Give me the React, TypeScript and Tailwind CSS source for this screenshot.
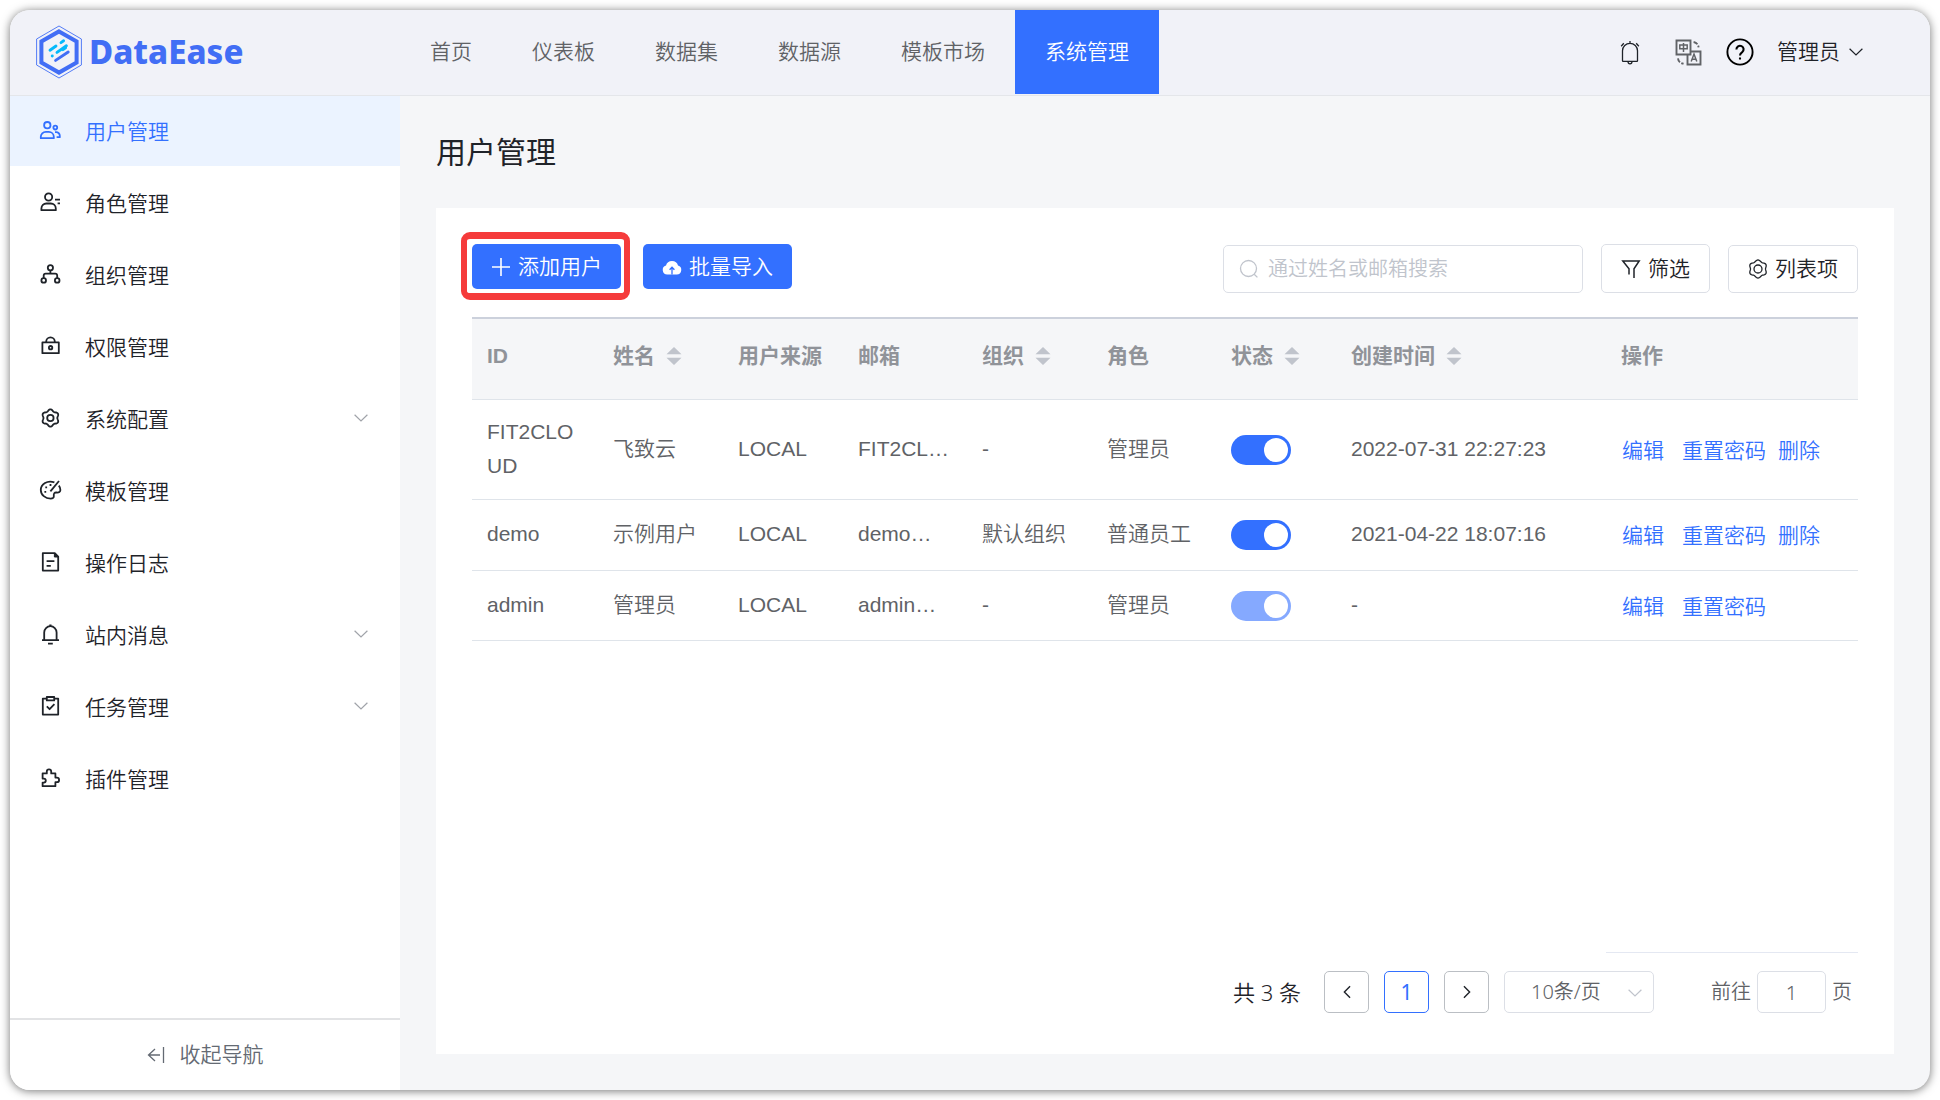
import React from "react";

type IconProps = { children: React.ReactNode };

function MenuIcon({ children }: IconProps) {
  return (
    <svg
      viewBox="0 0 24 24"
      className="mb-0.5 size-6 shrink-0"
      fill="none"
      stroke="currentColor"
      strokeWidth="1.8"
      strokeLinejoin="round"
      aria-hidden="true"
    >
      {children}
    </svg>
  );
}

function lobes(cx: number, cy: number, radius: number, depth: number) {
  const points: string[] = [];
  for (let i = 0; i < 72; i++) {
    const a = (i / 72) * Math.PI * 2;
    const r = radius - depth * Math.cos(6 * a);
    points.push(`${(cx + r * Math.cos(a)).toFixed(2)} ${(cy + r * Math.sin(a)).toFixed(2)}`);
  }
  return `M${points.join("L")}Z`;
}

function ChevronDown({ className }: { className: string }) {
  return (
    <svg viewBox="0 0 14 8" className={className} fill="none" stroke="currentColor" strokeWidth="1.2" aria-hidden="true">
      <path d="M0.6 0.8 7 7 13.4 0.8" />
    </svg>
  );
}

const menu = [
  {
    label: "用户管理",
    active: true,
    icon: (
      <>
        <circle cx="9.3" cy="7.2" r="3.2" />
        <path d="M2.8 20.2v-1.4a5 5 0 0 1 5-5h3a5 5 0 0 1 5 5v1.4z" />
        <circle cx="17.3" cy="9.6" r="1.9" />
        <path d="M17 14.2h1.2a3.6 3.6 0 0 1 3.6 3.6v1.4h-3.2" />
      </>
    ),
  },
  {
    label: "角色管理",
    icon: (
      <>
        <circle cx="10.6" cy="7" r="3.6" />
        <path d="M3.4 20.2v-1.7a5 5 0 0 1 5-5h4.4a5 5 0 0 1 5 5v1.7z" />
        <path d="M17 9.6h5M19.6 13.3H22" />
      </>
    ),
  },
  {
    label: "组织管理",
    icon: (
      <>
        <circle cx="12.4" cy="5.8" r="2.6" />
        <circle cx="5.7" cy="18.4" r="2.3" />
        <circle cx="19.2" cy="18.4" r="2.3" />
        <path d="M12.4 8.4v3.2M5.7 16v-2.4q0-2 2-2h9.5q2 0 2 2V16" />
      </>
    ),
  },
  {
    label: "权限管理",
    icon: (
      <>
        <path d="M4.4 8.4h16.4v10.8H4.4zM8.2 8.2V7.6a4.3 4.3 0 0 1 8.6 0v.6" />
        <circle cx="12.6" cy="13.7" r="1.7" />
      </>
    ),
  },
  {
    label: "系统配置",
    expandable: true,
    icon: (
      <>
        <path d={lobes(12.4, 12, 7.8, -0.9)} transform="rotate(30 12.4 12)" />
        <circle cx="12.4" cy="12" r="3.2" />
      </>
    ),
  },
  {
    label: "模板管理",
    icon: (
      <>
        <path d="M16.4 4.4C9.500 1.800 2.800 6 2.800 12c0 5 4.600 8.600 9.800 8.600 2.400 0 3.400-1 3.200-2.600-.3-2.600.6-3.700 2.800-3.500 2.400.2 3.800-.8 3.800-2.600 0-1.500-.6-3-1.600-4.200" />
        <path d="M12.400 13.400 21 3" />
        <path d="M11.600 7h1.800M7.300 9.400h1.800M6.400 13.800h1.800" />
      </>
    ),
  },
  {
    label: "操作日志",
    icon: (
      <>
        <path d="M4.8 3.2h12l3.4 3.4v14H4.8z" />
        <path d="M16.4 3.2V7h3.8z" fill="currentColor" strokeWidth="1" />
        <path d="M8.6 11.2h7.8M8.6 15.8h4.2" />
      </>
    ),
  },
  {
    label: "站内消息",
    expandable: true,
    icon: <path d="M4 18.2h17M6.2 18.2v-7.800a6.200 6.200 0 0 1 12.400 0v7.800M11.300 3.400h2.200M10 21.600h4.800" />,
  },
  {
    label: "任务管理",
    expandable: true,
    icon: (
      <>
        <path d="M8.6 4.6H4.8v16h15.4v-16h-3.8" />
        <path d="M8.8 3h7.4v3.4H8.8zM8.8 12.4l2.8 2.8 4.8-5" />
      </>
    ),
  },
  {
    label: "插件管理",
    icon: (
      <path d="M4.6 7.4h4.2V5.600a2.200 2.200 0 0 1 4.400 0v1.800h4.200v4.200h1.400a2.300 2.300 0 0 1 0 4.600h-1.400v4H4.600v-3.600h1.200a2 2 0 0 0 0-4H4.600z" />
    ),
  },
];

const tabs = ["首页", "仪表板", "数据集", "数据源", "模板市场", "系统管理"];

const columns = [
  { label: "ID" },
  { label: "姓名", sortable: true },
  { label: "用户来源" },
  { label: "邮箱" },
  { label: "组织", sortable: true },
  { label: "角色" },
  { label: "状态", sortable: true },
  { label: "创建时间", sortable: true },
  { label: "操作" },
];

const users = [
  { id: "FIT2CLOUD", name: "飞致云", mail: "FIT2CL…", org: "-", role: "管理员", created: "2022-07-31 22:27:23", locked: false },
  { id: "demo", name: "示例用户", mail: "demo…", org: "默认组织", role: "普通员工", created: "2021-04-22 18:07:16", locked: false },
  { id: "admin", name: "管理员", mail: "admin…", org: "-", role: "管理员", created: "-", locked: true },
];

function Logo() {
  return (
    <a href="#" className="flex items-center gap-[7px] text-[#426ef5]">
      <svg viewBox="0 0 46 54" className="h-[54px] w-[46px]" fill="none" aria-hidden="true">
        <path d="M23 1 45.4 14v26L23 53 .6 40V14z" stroke="#426ef5" strokeWidth="0.9" />
        <path d="M23 6.4 40.6 16.400v21.200L23 47.600 5.400 37.600V16.400z" stroke="#426ef5" strokeWidth="4" />
        <g strokeLinecap="round" strokeWidth="2.9">
          <path d="M14 25.2 20 21M25 17.600 27.600 15.800M21 27.400 30.400 20.800" stroke="#04b9fb" />
          <path d="M16.2 31h.1" stroke="#04b9fb" />
          <path d="M27 24.6l2.6-1.8" stroke="#04b9fb" />
          <path d="M19.6 35.4 32.200 27" stroke="#426ef5" />
        </g>
      </svg>
      <span className="font-['Noto_Sans',sans-serif] text-[33px] leading-10 font-extrabold">DataEase</span>
    </a>
  );
}

function Header() {
  return (
    <header className="flex h-[86px] shrink-0 items-start border-b border-[#e4e6ea] bg-[#f1f2f8] pr-[67px] pl-[26px]">
      <div className="flex h-[84px] w-[364px] shrink-0 items-center">
        <Logo />
      </div>
      <nav className="flex h-[84px] flex-1">
        {tabs.map((t) => (
          <a
            key={t}
            href="#"
            className={
              t === "系统管理"
                ? "flex items-center bg-[#3370ff] px-[30px] whitespace-nowrap text-white"
                : "flex items-center px-[30px] whitespace-nowrap text-[#606266]"
            }
          >
            {t}
          </a>
        ))}
      </nav>
      <div className="flex h-[84px] items-center text-[#1f2329]">
        <button aria-label="通知" className="mr-[34px]">
          <svg viewBox="0 0 22 26" className="h-[26px] w-[22px]" fill="none" stroke="currentColor" strokeWidth="1.3" aria-hidden="true">
            <path d="M3.500 21.800V11.800a7.500 7.500 0 0 1 15 0v10q0 .6-.6.6H4.100q-.6 0-.6-.6zM11 2v2.300M2.200 7.200l2.600-3M19.800 7.200l-2.600-3M9 22.600a2 2.200 0 0 0 4 0" />
          </svg>
        </button>
        <button aria-label="切换语言" className="mr-6 text-[#606266]">
          <svg viewBox="0 0 27 27" className="size-[27px]" fill="none" stroke="currentColor" strokeWidth="1.9" aria-hidden="true">
            <path d="M1.500 1.500h14v14h-14zM15.500 12.500H25.500v13h-13V15.500" />
            <path d="M8.500 4v9M4.800 6h7.400v3.800H4.800zM16.200 22.400 19 15l2.800 7.400M17 20.200h4" strokeWidth="1.5" />
            <path d="M18.600 3q4.400.8 5 5.400M3 19.400q.4 4.600 5.600 5.200" strokeDasharray="4.500 1.600" />
          </svg>
        </button>
        <button aria-label="帮助" className="mr-[23px] text-black">
          <svg viewBox="0 0 28 28" className="size-7" fill="none" stroke="currentColor" strokeWidth="1.9" aria-hidden="true">
            <circle cx="14" cy="14" r="12.600" />
            <path d="M10.400 11.400a3.600 3.600 0 1 1 5.800 2.800C14.600 15.300 14 16 14 17.600M14 19.400v2.200" strokeWidth="2.1" />
          </svg>
        </button>
        <button className="flex items-center gap-[9px]">
          管理员
          <ChevronDown className="h-2 w-3.5" />
        </button>
      </div>
    </header>
  );
}

function Sidebar() {
  return (
    <aside className="flex w-[390px] shrink-0 flex-col bg-white">
      <nav className="flex flex-1 flex-col gap-0.5">
        {menu.map((m) => (
          <a
            key={m.label}
            href="#"
            className={
              m.active
                ? "flex h-[70px] items-center bg-[#ebf3ff] pr-8 pl-7 text-[#3370ff]"
                : "flex h-[70px] items-center pr-8 pl-7 text-[#1f2329]"
            }
          >
            <MenuIcon>{m.icon}</MenuIcon>
            <span className="ml-[23px] flex-1 pt-0.5">{m.label}</span>
            {m.expandable && <ChevronDown className="mb-0.5 h-2 w-3.5 text-[#a0a3a9]" />}
          </a>
        ))}
      </nav>
      <button className="flex h-[72px] shrink-0 items-center justify-center gap-[15px] border-t-2 border-[#e2e3e5] text-[#646a73]">
        <svg viewBox="0 0 18 18" className="size-[18px]" fill="none" stroke="currentColor" strokeWidth="1.3" aria-hidden="true">
          <path d="M8 3 1.500 9 8 15M1.500 9h11.500M16.500 1v16" />
        </svg>
        <span>收起导航</span>
      </button>
    </aside>
  );
}

function Toolbar() {
  return (
    <div className="flex items-start">
      <div className="relative">
        <button className="flex h-[45px] items-center gap-[7px] rounded-[5px] bg-[#3370ff] px-[19px] text-white">
          <svg viewBox="0 0 20 20" className="size-5" stroke="currentColor" strokeWidth="1.6" aria-hidden="true">
            <path d="M10 1v18M1 10h18" />
          </svg>
          添加用户
        </button>
        <span className="pointer-events-none absolute -top-3 -right-[9px] -bottom-[11px] -left-[11px] rounded-[9px] border-x-[6px] border-y-[7px] border-[#f53b3b]" />
      </div>
      <button className="ml-[22px] flex h-[45px] items-center gap-[7px] rounded-[5px] bg-[#3370ff] px-[19px] text-white">
        <svg viewBox="0 0 20 20" className="size-5" aria-hidden="true">
          <path d="M5.200 17.600A4.600 4.600 0 0 1 4 8.600a6.200 6.200 0 0 1 12 0 4.600 4.600 0 0 1-1.200 9z" fill="currentColor" />
          <path d="M10 17.600v-6.400M7.600 12.800 10 10.200l2.400 2.600" fill="none" stroke="#3370ff" strokeWidth="1.3" />
        </svg>
        批量导入
      </button>
      <div className="ml-auto flex items-end gap-[18px] text-[#1f2329]">
        <label className="flex h-12 w-[360px] items-center gap-[9px] rounded-[5px] border border-[#dcdfe6] bg-white px-[15px]">
          <svg viewBox="0 0 20 20" className="size-5 shrink-0 text-[#c0c4cc]" fill="none" stroke="currentColor" strokeWidth="1.3" aria-hidden="true">
            <circle cx="9.500" cy="9.500" r="8" />
            <path d="m15.200 15.200 3.200 3.200" />
          </svg>
          <input
            type="text"
            aria-label="搜索用户"
            placeholder="通过姓名或邮箱搜索"
            className="w-full min-w-0 bg-transparent text-xl outline-none placeholder:text-[#c0c4cc]"
          />
        </label>
        <button className="flex h-[49px] items-center gap-[7px] rounded-[5px] border border-[#dcdfe6] bg-white px-[19px]">
          <svg viewBox="0 0 20 20" className="size-5" fill="none" stroke="currentColor" strokeWidth="1.5" aria-hidden="true">
            <path d="M8 15.500V9.800L1.800 2h16.400L13 9.800V19" />
          </svg>
          筛选
        </button>
        <button className="flex h-12 items-center gap-[7px] rounded-[5px] border border-[#dcdfe6] bg-white px-[19px]">
          <svg viewBox="0 0 20 20" className="size-5" fill="none" stroke="currentColor" strokeWidth="1.3" aria-hidden="true">
            <path d={lobes(10, 10, 8.3, -0.8)} transform="rotate(30 10 10)" />
            <circle cx="10" cy="10" r="4" />
          </svg>
          列表项
        </button>
      </div>
    </div>
  );
}

function UserTable() {
  return (
    <table className="mt-6 w-full table-fixed border-separate border-spacing-0 border-t-2 border-[#ccd1dc] text-left text-[#606266]">
      <colgroup>
        <col className="w-[126px]" />
        <col className="w-[125px]" />
        <col className="w-[120px]" />
        <col className="w-[124px]" />
        <col className="w-[125px]" />
        <col className="w-[124px]" />
        <col className="w-[120px]" />
        <col />
        <col className="w-[252px]" />
      </colgroup>
      <thead>
        <tr className="h-[81px] bg-[#f5f6f8] text-[#909399]">
          {columns.map((c) => (
            <th key={c.label} className="border-b border-[#dfe4ea] px-[15px] pb-1.5 font-bold whitespace-nowrap">
              <span className="flex items-center gap-[11px]">
                {c.label}
                {c.sortable && (
                  <svg viewBox="0 0 16 18" className="h-[18px] w-4 shrink-0 fill-[#c0c4cc]" aria-hidden="true">
                    <path d="M8 0 15.500 7.200H.5zM8 18 15.500 10.800H.5z" />
                  </svg>
                )}
              </span>
            </th>
          ))}
        </tr>
      </thead>
      <tbody>
        {users.map((u, i) => (
          <tr
            key={u.id}
            className={
              i === 0
                ? "h-[100px] *:border-b *:border-[#dfe4ea] *:px-[15px]"
                : i === 1
                  ? "h-[71px] *:border-b *:border-[#dfe4ea] *:px-[15px]"
                  : "h-[70px] *:border-b *:border-[#dfe4ea] *:px-[15px]"
            }
          >
            <td className="pb-0.5 leading-[34px] break-all">{u.id}</td>
            <td className="pb-0.5 whitespace-nowrap">{u.name}</td>
            <td className="pb-0.5">LOCAL</td>
            <td className="pb-0.5 whitespace-nowrap">{u.mail}</td>
            <td className="pb-0.5 whitespace-nowrap">{u.org}</td>
            <td className="pb-0.5 whitespace-nowrap">{u.role}</td>
            <td>
              <input
                type="checkbox"
                role="switch"
                defaultChecked
                disabled={u.locked}
                aria-label={`${u.name} 状态`}
                className="grid h-[30px] w-[60px] appearance-none items-center rounded-full bg-[#dcdfe6] p-[3px] before:size-6 before:rounded-full before:bg-white before:content-[''] checked:justify-items-end checked:bg-[#3370ff] disabled:bg-[#85a9ff]"
              />
            </td>
            <td className="pb-0.5 whitespace-nowrap">{u.created}</td>
            <td>
              <div className="flex items-center pt-0.5 pl-px whitespace-nowrap text-[#3370ff]">
                <button className="mr-[18px]">编辑</button>
                <button className="mr-3">重置密码</button>
                {!u.locked && <button>删除</button>}
              </div>
            </td>
          </tr>
        ))}
      </tbody>
    </table>
  );
}

function Pagination() {
  return (
    <div className="mt-auto">
      <div className="ml-auto w-[252px] border-t border-[#e4e8f2]" />
      <div className="mt-[18px] mb-[41px] flex items-center justify-end pr-1.5 font-['Noto_Sans','Noto_Sans_CJK_SC',sans-serif] font-normal text-[#606266]">
        <span className="mr-[23px] text-[22px] font-[350] text-[#1f2329]">共 3 条</span>
        <div className="flex gap-[15px]">
          <button aria-label="上一页" className="flex h-[42px] w-[45px] items-center justify-center rounded-[5px] border border-[#bbbfc4] text-[#1f2329]">
            <svg viewBox="0 0 10 16" className="h-3.5 w-2.5" fill="none" stroke="currentColor" strokeWidth="1.6" aria-hidden="true">
              <path d="M8.500 1.500 2 8l6.500 6.500" />
            </svg>
          </button>
          <button aria-current="page" className="h-[42px] w-[45px] rounded-[5px] border border-[#3370ff] text-[#3370ff]">
            1
          </button>
          <button aria-label="下一页" className="flex h-[42px] w-[45px] items-center justify-center rounded-[5px] border border-[#bbbfc4] text-[#1f2329]">
            <svg viewBox="0 0 10 16" className="h-3.5 w-2.5" fill="none" stroke="currentColor" strokeWidth="1.6" aria-hidden="true">
              <path d="M1.500 1.500 8 8l-6.500 6.500" />
            </svg>
          </button>
          <div className="relative font-[350]">
            <select aria-label="每页条数" className="h-[42px] w-[150px] appearance-none rounded-[5px] border border-[#dcdfe6] bg-white pl-[26px] text-xl">
              <option>10条/页</option>
            </select>
            <ChevronDown className="pointer-events-none absolute top-[18px] right-3 h-2 w-3.5 text-[#c0c4cc]" />
          </div>
        </div>
        <label className="ml-[57px] flex items-center gap-1.5 text-xl font-[350]">
          前往
          <input type="text" defaultValue="1" className="h-[42px] w-[69px] rounded-[5px] border border-[#dcdfe6] text-center outline-none" />
          页
        </label>
      </div>
    </div>
  );
}

export default function App() {
  return (
    <div className="h-screen bg-white p-2.5 font-['Liberation_Sans','Noto_Sans_CJK_SC',sans-serif] text-[21px] leading-[30px] font-[350]">
      <div className="flex h-full flex-col overflow-hidden rounded-[20px] bg-[#f5f6f8] shadow-[0_1px_10px_rgba(0,0,0,0.55)]">
        <Header />
        <div className="flex min-h-0 flex-1">
          <Sidebar />
          <main className="flex min-w-0 flex-1 flex-col p-9 pt-[34px]">
            <h1 className="text-3xl leading-[46px] font-normal text-[#1f2329]">用户管理</h1>
            <section className="mt-8 flex flex-1 flex-col bg-white px-9 pt-9">
              <Toolbar />
              <UserTable />
              <Pagination />
            </section>
          </main>
        </div>
      </div>
    </div>
  );
}
